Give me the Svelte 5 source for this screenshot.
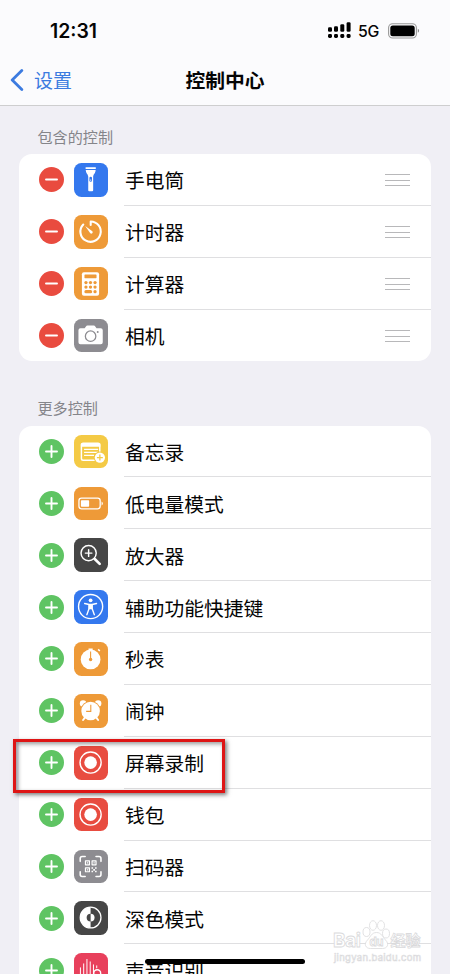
<script>
  const included = [
    { name: "手电筒", icon: "torch", color: "blue" },
    { name: "计时器", icon: "timer", color: "orange" },
    { name: "计算器", icon: "calculator", color: "orange" },
    { name: "相机", icon: "camera", color: "gray" },
  ];

  const more = [
    { name: "备忘录", icon: "notes", color: "yellow" },
    { name: "低电量模式", icon: "battery", color: "orange" },
    { name: "放大器", icon: "magnifier", color: "dark" },
    { name: "辅助功能快捷键", icon: "accessibility", color: "blue" },
    { name: "秒表", icon: "stopwatch", color: "orange" },
    { name: "闹钟", icon: "alarm", color: "orange" },
    { name: "屏幕录制", icon: "record", color: "red", marked: true },
    { name: "钱包", icon: "record", color: "red" },
    { name: "扫码器", icon: "scanner", color: "gray" },
    { name: "深色模式", icon: "darkmode", color: "dark" },
    { name: "声音识别", icon: "sound", color: "pink" },
  ];
</script>

{#snippet glyph(icon)}
  {#if icon === "torch"}
    <rect x="11.6" y="4.2" width="10.6" height="1.8" rx=".6" />
    <path d="M11.9 7h10c0 3.3-2.5 4.2-2.5 7v13.6q0 1-1 1h-3q-1 0-1-1V14c0-2.8-2.5-3.7-2.5-7z" />
    <rect class="cut" x="15.6" y="14" width="2.6" height="5" rx="1.3" />
    <circle cx="16.9" cy="17.3" r=".7" />
  {:else if icon === "timer"}
    <path class="line" stroke-width="2.1" d="M16.9 10V6.5a10.3 10.3 0 1 1-7.5 3.1" />
    <path d="M11.3 11.2l7.3 5.2a1.5 1.5 0 0 1-2.1 2.1z" />
  {:else if icon === "calculator"}
    <rect x="8" y="5.3" width="17.4" height="23.7" rx="2" />
    <rect class="cut" x="10.6" y="7.5" width="12.2" height="4" rx=".5" />
    {#each [15.7, 20.3] as y}
      {#each [12.1, 16.7, 21.3] as x}
        <circle class="cut" cx={x} cy={y} r="1.65" />
      {/each}
    {/each}
    <rect class="cut" x="10.5" y="23.4" width="7.9" height="3.2" rx="1.6" />
    <circle class="cut" cx="21.3" cy="25" r="1.65" />
  {:else if icon === "camera"}
    <path d="M6.5 9.4h4.3l1.3-1.9q.5-.8 1.5-.8h6.4q1 0 1.5.8l1.3 1.9h4.3q2 0 2 2v12.2q0 2-2 2H6.500q-2 0-2-2V11.400q0-2 2-2z" />
    <circle class="ink" stroke-width="1.3" cx="16.8" cy="17.4" r="5.3" />
    <circle class="cut" cx="24" cy="13.2" r="1" />
  {:else if icon === "notes"}
    <rect class="line" stroke-width="1.5" x="7.5" y="8.3" width="18.6" height="17.2" rx="1.8" />
    <path d="M7 8.5h19.600V12H7zM10.200 13.900h14.200v1.200H10.200zM10.200 17h14.200v1.200H10.200zM10.200 20.100h10v1.200h-10z" />
    <circle class="cut" cx="26.2" cy="22.8" r="6.2" />
    <circle cx="26.2" cy="22.8" r="5.2" />
    <path class="ink" stroke-width="1.3" d="M26.200 19.800v6M23.200 22.800h6" />
  {:else if icon === "battery"}
    <rect class="line" stroke-width="1.3" x="5" y="11.3" width="21.5" height="10.8" rx="2.5" />
    <rect x="7" y="13.3" width="8.3" height="6.8" rx=".8" />
    <path d="M27.900 14.700q1.300.6 1.300 2t-1.300 2z" />
  {:else if icon === "magnifier"}
    <circle class="line" stroke-width="1.5" cx="14.8" cy="15.3" r="7.7" />
    <path class="line" stroke-width="1.5" d="M14.800 12v6.600M11.500 15.300h6.600" />
    <path class="line" stroke-width="2.7" d="M21 21.300l5 4.900" />
  {:else if icon === "accessibility"}
    <circle class="line" stroke-width="1.4" cx="16.8" cy="16.8" r="12.2" />
    <circle cx="16.8" cy="10.5" r="1.9" />
    <path class="line" stroke-width="1.4" d="M10.800 13.700l4.500 1h3l4.500-1M15.300 15l-.1 4-2.200 6M18.300 15l.1 4 2.200 6" />
    <path d="M14.700 14.200h4.200v5.400h-4.200z" />
  {:else if icon === "stopwatch"}
    <circle cx="16.8" cy="17.7" r="10" />
    <path d="M14.700 6.500h4.200v3h-4.200zM23.900 8l1.100-1.100 1.700 1.700-1.100 1.100z" />
    <path class="ink" stroke-width="1.1" d="M16.800 9.700v8" />
    <circle class="cut" cx="16.8" cy="17.7" r="1.7" />
  {:else if icon === "alarm"}
    <circle cx="9.2" cy="9.5" r="3.3" />
    <circle cx="24.4" cy="9.5" r="3.3" />
    <circle class="cut" cx="16.8" cy="17.2" r="10.2" />
    <circle cx="16.8" cy="17.2" r="9.4" />
    <path class="line" stroke-width="2" d="M11 24l-1.800 2.300M22.600 24l1.800 2.300" />
    <path class="ink" stroke-width="1.1" d="M17 10.900v6.700h-4.700" />
  {:else if icon === "record"}
    <circle class="line" stroke-width="1.4" cx="16.8" cy="16.8" r="10.7" />
    <circle cx="16.8" cy="16.8" r="6.4" />
  {:else if icon === "scanner"}
    <path class="line" stroke-width="1.6" d="M6.300 11.500V8.600q0-2 2-2h3M22.300 6.600h3q2 0 2 2v2.900M27.300 22v2.900q0 2-2 2h-3M11.300 26.900h-3q-2 0-2-2V22" />
    <path class="line" stroke-width="1.2" d="M11.600 11h4v4h-4zM18.300 11h4v4h-4zM11.600 18h4v4h-4z" />
    <path d="M13 12.400h1.300v1.300H13zM19.700 12.400H21v1.300h-1.300zM13 19.400h1.300v1.300H13zM17.700 17.400h1.600V19h-1.600zM21.300 17.400h1.600V19h-1.600zM19.500 19.200h1.700v1.700h-1.700zM17.700 21h1.600v1.600h-1.600zM21.300 21h1.600v1.600h-1.600z" />
  {:else if icon === "darkmode"}
    <circle class="line" stroke-width="1.3" cx="16.8" cy="16.8" r="10.5" />
    <path d="M16.800 6.300a10.500 10.500 0 0 0 0 21v-6.500a4 4 0 0 1 0-8z" />
    <path d="M16.800 12.800a4 4 0 0 1 0 8z" />
  {:else if icon === "sound"}
    <path class="line" stroke-width="1" d="M6.500 15v8M9.800 11v16M13.100 6.500V28M16.400 9v18M19.700 12v14M23 13v2" />
    <circle class="line" stroke-width="1.4" cx="23.5" cy="20.5" r="3.5" />
  {/if}
{/snippet}

{#snippet row(item, kind)}
  <li class="row">
    <span class="toggle {kind}">
      <svg viewBox="0 0 25 25">
        <path d={kind === "add" ? "M12.500 7v11M7 12.500h11" : "M7 12.500h11"} />
      </svg>
    </span>
    <svg class="icon {item.color}" viewBox="0 0 34 34">{@render glyph(item.icon)}</svg>
    <div class="cell">
      <span class="name">{item.name}</span>
      {#if kind === "remove"}
        <span class="grip"><i></i><i></i><i></i></span>
      {/if}
    </div>
    {#if item.marked}
      <div class="mark"></div>
    {/if}
  </li>
{/snippet}

<div class="screen">
  <header>
    <div class="status">
      <span class="time">12:31</span>
      <div class="signals">
        <svg class="bars" width="23" height="17" viewBox="0 0 23 17">
          <rect x="0" y="5.3" width="4" height="4.5" rx="1.3" />
          <rect x="6" y="4.3" width="4" height="5.5" rx="1.3" />
          <rect x="12.3" y="2.3" width="4" height="7.5" rx="1.3" />
          <rect x="18.6" y=".3" width="4" height="9.5" rx="1.3" />
          {#each [0, 6, 12.3, 18.6] as x}
            <rect {x} y="12" width="4" height="4" rx="1.4" />
          {/each}
        </svg>
        <span class="net">5G</span>
        <svg class="power" width="32" height="16" viewBox="0 0 32 16">
          <rect class="shell" x=".6" y=".7" width="27.8" height="14.3" rx="4" />
          <rect x="2.3" y="2.4" width="24.4" height="10.9" rx="2.5" />
          <path class="cap" d="M29.800 5.800q1.300.6 1.300 2t-1.300 2z" />
        </svg>
      </div>
    </div>
    <nav>
      <span class="back">
        <svg width="14" height="22" viewBox="0 0 14 22"><path d="M11.800 1.500L2.200 11l9.600 9.500" /></svg>
        <span>设置</span>
      </span>
      <h1>控制中心</h1>
    </nav>
  </header>

  <main>
    <h2>包含的控制</h2>
    <ul>
      {#each included as item}
        {@render row(item, "remove")}
      {/each}
    </ul>
    <h2 class="second">更多控制</h2>
    <ul>
      {#each more as item}
        {@render row(item, "add")}
      {/each}
    </ul>
  </main>

  <svg class="watermark" width="92" height="48" viewBox="0 0 92 48">
    <ellipse cx="34.5" cy="13" rx="3.5" ry="4.5" />
    <ellipse cx="41" cy="6.5" rx="3.5" ry="4.8" />
    <ellipse cx="49" cy="6.5" rx="3.5" ry="4.8" />
    <ellipse cx="54" cy="14.5" rx="3.5" ry="4.5" />
    <path d="M44.500 13.500c5 0 6 4.500 9 7.500 4 4 2 8.500-3 8.500H38.500c-5 0-7-4.500-3-8.500 3-3 4-7.500 9-7.500z" />
    <text x="1" y="28" font-size="19" font-weight="700" textLength="28">Bai</text>
    <text x="37.5" y="26.5" font-size="11.5" font-weight="700" textLength="14">du</text>
    <text x="58.500" y="27" font-size="15" font-weight="700">经验</text>
    <text class="url" x="2" y="42" font-size="9.5" textLength="87">jingyan.baidu.com</text>
  </svg>
  <div class="home"></div>
</div>

<style>
  :global(body) {
    margin: 0;
    overflow: hidden;
  }
  .screen {
    position: relative;
    height: 974px;
    overflow: hidden;
    background: #f0eff5;
    color: #050505;
    font-family: Inter, "Noto Sans CJK SC", sans-serif;
  }
  header {
    box-sizing: border-box;
    height: 106px;
    background: #fbfbfd;
    border-bottom: 1px solid #cececf;
  }
  .status {
    box-sizing: border-box;
    display: flex;
    justify-content: space-between;
    align-items: center;
    height: 55px;
    padding: 6px 30px 0 50px;
  }
  .time {
    font-size: 19.4px;
    font-weight: 600;
  }
  .signals {
    display: flex;
    align-items: center;
  }
  .bars {
    margin-right: 1px;
  }
  .net {
    margin: 1px 8px 0 6px;
    width: 22px;
    font-size: 15.8px;
    font-weight: 500;
    letter-spacing: -0.2px;
  }
  .shell {
    fill: none;
    stroke: #999;
    stroke-width: 1.1;
  }
  .cap {
    fill: #888;
  }
  nav {
    display: grid;
    grid-template-columns: 1fr auto 1fr;
    align-items: center;
    height: 50px;
    font-size: 19.7px;
  }
  .back {
    display: flex;
    align-items: center;
    gap: 10px;
    padding-left: 10px;
    font-size: 19px;
    color: #3c7be0;
  }
  .back span {
    padding-bottom: 2px;
  }
  .back path {
    fill: none;
    stroke: #3c7be0;
    stroke-width: 2.8;
    stroke-linecap: round;
    stroke-linejoin: round;
  }
  h1 {
    margin: 0;
    padding-bottom: 2px;
    font-size: 19.8px;
    font-weight: 600;
  }
  main {
    padding: 0 19px;
  }
  h2 {
    box-sizing: border-box;
    height: 48px;
    margin: 0;
    padding: 21px 0 0 18.500px;
    font-size: 15.1px;
    font-weight: 400;
    line-height: 22px;
    color: #85858a;
  }
  h2.second {
    height: 64.2px;
    padding-top: 37px;
  }
  ul {
    margin: 0;
    padding: 0;
    list-style: none;
    background: #fff;
    border-radius: 13px;
  }
  .row {
    position: relative;
    display: flex;
    align-items: center;
    height: 51.87px;
    padding-left: 20px;
  }
  .toggle {
    display: flex;
    width: 25px;
    height: 25px;
    margin-right: 10px;
    border-radius: 50%;
  }
  .toggle path {
    stroke: #fff;
    stroke-width: 1.9;
    stroke-linecap: round;
  }
  .remove {
    background: #e94b3f;
  }
  .add {
    background: #5fc463;
  }
  .icon {
    width: 33.6px;
    height: 33.6px;
    margin-right: 16.4px;
    border-radius: 7.5px;
    background: var(--tile);
    fill: #fff;
  }
  .icon .cut {
    fill: var(--tile);
  }
  .icon .line {
    fill: none;
    stroke: #fff;
    stroke-linecap: round;
    stroke-linejoin: round;
  }
  .icon .ink {
    fill: none;
    stroke: var(--tile);
  }
  .blue {
    --tile: #3478ee;
  }
  .orange {
    --tile: #ee9a38;
  }
  .gray {
    --tile: #8d8c91;
  }
  .yellow {
    --tile: #f4ca45;
  }
  .dark {
    --tile: #464646;
  }
  .red {
    --tile: #e84c40;
  }
  .pink {
    --tile: #e8405c;
  }
  .cell {
    box-sizing: border-box;
    display: flex;
    flex: 1;
    justify-content: space-between;
    align-items: center;
    height: 100%;
    padding-right: 21px;
    border-bottom: 1px solid #dfdfe1;
  }
  .row:last-child .cell {
    border-bottom-color: transparent;
  }
  .name {
    padding: 1px 0 0 1px;
    font-size: 19.75px;
  }
  .grip {
    display: grid;
    gap: 4.5px;
    width: 25px;
    padding-top: 2px;
  }
  .grip i {
    height: 1px;
    background: #b8b8ba;
  }
  /* callout frame over the screen recording row */
  .mark {
    position: absolute;
    z-index: 1;
    top: 2px;
    left: -6px;
    box-sizing: border-box;
    width: 212px;
    height: 54px;
    border: 3px solid #de1515;
    box-shadow: 2px 2px 4px rgba(0, 0, 0, 0.5), inset 2px 2px 4px rgba(0, 0, 0, 0.4);
  }
  .watermark {
    position: absolute;
    top: 919px;
    left: 332px;
    fill: #fff;
    stroke: #dadadc;
    stroke-width: 0.8;
  }
  .watermark .url {
    stroke-width: 0.6;
  }
  .home {
    position: absolute;
    top: 959px;
    left: 145px;
    width: 160px;
    height: 5px;
    border-radius: 3px;
    background: #000;
  }
</style>
